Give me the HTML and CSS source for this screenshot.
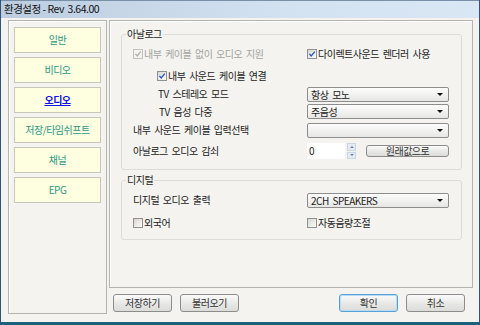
FILE: index.html
```html
<!doctype html>
<html>
<head>
<meta charset="utf-8">
<title>환경설정</title>
<link rel="stylesheet" href="styles.css">
</head>
<body>
<div class="window">
	<div class="titlebar">환경설정 - Rev&nbsp; 3.64.00</div>
	<div class="frame">
		<ul class="nav">
			<li>일반</li>
			<li>비디오</li>
			<li class="on">오디오</li>
			<li>저장/타임쉬프트</li>
			<li>채널</li>
			<li>EPG</li>
		</ul>
		<div class="main">
			<div class="panel">
				<fieldset class="group">
					<legend>아날로그</legend>
					<div class="rows analog">
						<label class="chk off"><span class="box"><svg viewBox="0 0 9 9"><path d="M1.6 4.4 L3.6 6.6 L7.6 1.8"/></svg></span>내부 케이블 없이 오디오 지원</label>
						<label class="chk"><span class="box"><svg viewBox="0 0 9 9"><path d="M1.6 4.4 L3.6 6.6 L7.6 1.8"/></svg></span>다이렉트사운드 렌더러 사용</label>

						<label class="chk in1"><span class="box"><svg viewBox="0 0 9 9"><path d="M1.6 4.4 L3.6 6.6 L7.6 1.8"/></svg></span>내부 사운드 케이블 연결</label>
						<span></span>

						<span class="in2">TV 스테레오 모드</span>
						<div class="combo">항상 모노</div>

						<span class="in3">TV 음성 다중</span>
						<div class="combo">주음성</div>

						<span>내부 사운드 케이블 입력선택</span>
						<div class="combo"></div>

						<span>아날로그 오디오 감쇠</span>
						<div class="num">
							<span class="field">0</span>
							<span class="spin"><i class="up"></i><i class="down"></i></span>
							<button class="btn reset">원래값으로</button>
						</div>
					</div>
				</fieldset>
				<fieldset class="group">
					<legend>디지털</legend>
					<div class="rows digital">
						<span>디지털 오디오 출력</span>
						<div class="combo">2CH SPEAKERS</div>

						<label class="chk"><span class="box"></span>외국어</label>
						<label class="chk"><span class="box"></span>자동음량조절</label>
					</div>
				</fieldset>
			</div>
			<div class="actions">
				<button class="btn">저장하기</button>
				<button class="btn">불러오기</button>
				<span class="grow"></span>
				<button class="btn ok">확인</button>
				<button class="btn">취소</button>
			</div>
		</div>
	</div>
</div>
</body>
</html>
```
FILE: styles.css
```css
*{ margin: 0; padding: 0; list-style: none; box-sizing: border-box;}
body{ font: 10px/1.2 "Noto Sans CJK KR", "Noto Sans", sans-serif; letter-spacing: -0.5px; word-spacing: 2px; color: #222; background: #fff;}

.window{ width: 480px; height: 325px; display: flex; flex-direction: column; background: #f4f3ef; border-left: 1px solid #2f5478; border-right: 1px solid #2f5478; border-bottom: 3px solid #1c5f7d;}
.titlebar{ height: 18px; padding: 2px 0 0 3px; font-size: 10.5px; word-spacing: 0; color: #111; background: linear-gradient(to right, #bccde0, #d3e2f1 60%, #d9e7f5); border-top: 1px solid #7890a8;}

.frame{ flex: 1; display: flex; padding: 2px 6px 8px 7px;}

.nav{ width: 99px; border: 1px solid #b5b5ad; box-shadow: inset 1px 1px 0 #fff; padding: 6px 0 0 5px;}
.nav li{ width: 87px; height: 26px; margin-bottom: 4px; display: flex; align-items: center; justify-content: center; background: #fefee0; border: 1px solid #c7c7b9; color: #2a9985;}
.nav li.on{ color: #1010e8; text-decoration: underline; font-weight: bold;}

.main{ flex: 1; margin-left: 2px; display: flex; flex-direction: column;}
.panel{ height: 268px; border: 1px solid #b5b5ad; box-shadow: inset 1px 1px 0 #fff; padding: 6px 10px 0 11px;}

.group{ border: 1px solid #dcdcd4; border-radius: 3px; margin-bottom: 3px;}
.group legend{ margin-left: 4px; padding: 0 1px; line-height: 14px;}
.rows{ display: grid; grid-template-columns: 174px 142px; align-items: center; padding: 2px 0 6px 11px;}
.analog{ grid-template-rows: 22px 21px 16px 19px 18px 24px;}
.digital{ grid-template-rows: 22px 23px; padding-bottom: 5px;}
.in1{ margin-left: 24px;}
.in2{ margin-left: 25px;}
.in3{ margin-left: 26px;}

.chk{ display: flex; align-items: center;}
.chk .box{ width: 10px; height: 10px; margin-right: 1px; border: 1px solid #8f9090; background: linear-gradient(135deg, #d8d8d2, #fbfbf9); display: flex;}
.chk svg{ width: 8px; height: 8px;}
.chk path{ fill: none; stroke: #2c52c9; stroke-width: 1.5;}
.chk.off{ color: #a3a3a0;}
.chk.off .box{ border-color: #c3c3bd; background: #f3f3ef;}
.chk.off path{ stroke: #b0b0aa;}

.combo{ height: 15px; border: 1px solid #8d8d8d; border-radius: 2px; background: linear-gradient(#fdfdfd, #e6e6e4); padding: 0 3px; line-height: 13px; display: flex; justify-content: space-between; align-items: center;}
.combo::after{ content: ""; margin-left: auto; margin-right: 2px; border-left: 3px solid transparent; border-right: 3px solid transparent; border-top: 3px solid #111;}

.num{ display: flex; align-items: center;}
.field{ width: 38px; height: 16px; background: #fff; padding-left: 2px; line-height: 15px;}
.spin{ width: 9px; height: 16px; margin-left: 2px; display: flex; flex-direction: column; gap: 1px;}
.spin i{ flex: 1; background: #e4ecf5; border: 1px solid #c9d6e4; display: flex; align-items: center; justify-content: center;}
.spin i::after{ content: ""; border-left: 2px solid transparent; border-right: 2px solid transparent;}
.spin .up::after{ border-bottom: 2px solid #6d7f93;}
.spin .down::after{ border-top: 2px solid #6d7f93;}

.btn{ font: inherit; letter-spacing: inherit; color: #333; height: 18px; border: 1px solid #8c8c8c; border-radius: 3px; background: linear-gradient(#fbfbfb, #e7e7e5 55%, #dcdcd9);}
.reset{ width: 83px; height: 12px; margin-left: 10px; line-height: 10px;}

.actions{ display: flex; margin-top: 6px; padding: 0 8px 0 4px; gap: 8px;}
.actions .btn{ width: 59px;}
.actions .ok{ border-color: #5a9fd6; box-shadow: inset 0 0 0 1px #b5dbf6;}
.grow{ flex: 1;}
```
